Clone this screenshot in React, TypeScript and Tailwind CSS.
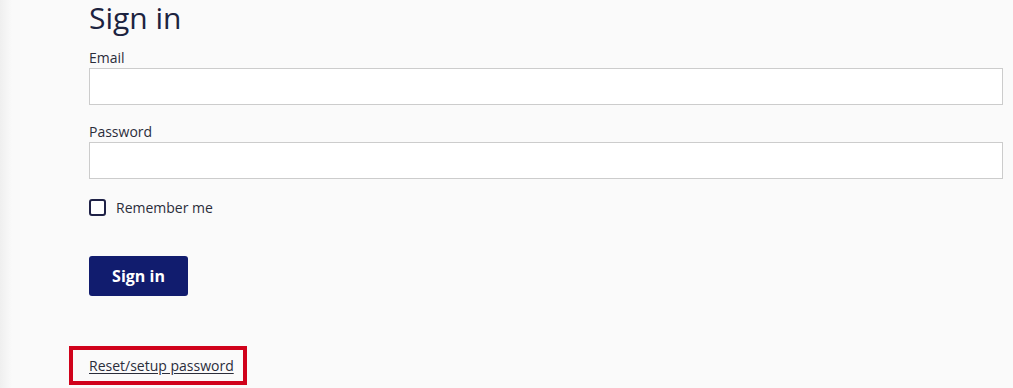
export default function App() {
  return (
    <div className="min-h-[388px] w-full bg-[#fafafa] bg-[linear-gradient(to_right,#efefef,#fafafa_12px)] font-['Open_Sans',sans-serif] text-[#2b2d3a]">
      <div className="pl-[89px] pr-[10px]">
        <h1 className="text-[30px] leading-9 text-[#1c2340]">Sign in</h1>

        <form className="mt-3 flex flex-col" onSubmit={(e) => e.preventDefault()}>
          <label htmlFor="email" className="text-sm leading-5">Email</label>
          <input
            id="email"
            type="email"
            className="h-[37px] w-full border border-[#cccccc] bg-white px-2 text-sm outline-none"
          />

          <label htmlFor="password" className="mt-[17px] text-sm leading-5">Password</label>
          <input
            id="password"
            type="password"
            className="h-[37px] w-full border border-[#cccccc] bg-white px-2 text-sm outline-none"
          />

          <label className="mt-5 flex h-[17px] items-center gap-[10px] text-sm">
            <input type="checkbox" className="peer sr-only" />
            <span className="h-[17px] w-[17px] rounded-[3px] border-2 border-[#1f2247] bg-white" />
            <span className="leading-5">Remember me</span>
          </label>

          <div className="mt-10">
            <button
              type="submit"
              className="h-10 w-[99px] rounded-[3px] bg-[#111c6e] text-base font-bold text-white"
            >
              Sign in
            </button>
          </div>
        </form>

        <div className="-ml-5 mt-[50px]">
          <div className="inline-block border-4 border-[#d0021b] pb-1 pl-4 pr-[9px] pt-[3px]">
            <a href="#" className="text-sm leading-5 text-[#2b2d3a] underline underline-offset-2">
              Reset/setup password
            </a>
          </div>
        </div>
      </div>
    </div>
  );
}
